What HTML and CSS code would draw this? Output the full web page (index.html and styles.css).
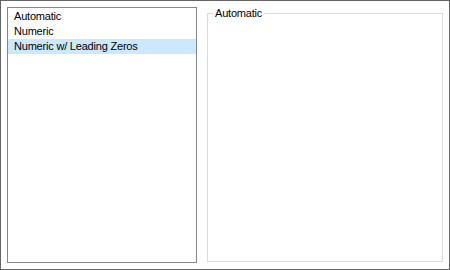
FILE: index.html
```html
<!DOCTYPE html>
<html>
<head>
<meta charset="utf-8">
<link rel="stylesheet" href="styles.css">
</head>
<body>
<div class="window">
  <ul class="list">
    <li class="item">Automatic</li>
    <li class="item">Numeric</li>
    <li class="item selected">Numeric w/ Leading Zeros</li>
  </ul>
  <fieldset class="group">
    <legend class="group-title">Automatic</legend>
  </fieldset>
</div>
</body>
</html>
```
FILE: styles.css
```css
html, body {
  margin: 0;
  padding: 0;
  background: #ffffff;
}
body {
  font-family: "Liberation Sans", Arial, sans-serif;
  font-size: 11px;
  letter-spacing: -0.2px;
  color: #000000;
}
.window {
  box-sizing: border-box;
  width: 450px;
  height: 270px;
  border: 1px solid #646464;
  padding: 6px;
  display: flex;
  gap: 10px;
  background: #ffffff;
}
.list {
  box-sizing: border-box;
  width: 190px;
  height: 256px;
  margin: 0;
  padding: 1px 0 0 0;
  list-style: none;
  border: 1px solid #828790;
  flex: none;
}
.item {
  height: 15px;
  line-height: 15px;
  padding-left: 6px;
  white-space: nowrap;
}
.item.selected {
  background: #cce8ff;
}
.group {
  box-sizing: border-box;
  flex: 1;
  height: 255px;
  margin: 0;
  padding: 0;
  border: 1px solid #dcdcdc;
  min-width: 0;
}
.group-title {
  margin-left: 5px;
  padding: 0 2px;
  line-height: 13px;
  height: 13px;
}
```
